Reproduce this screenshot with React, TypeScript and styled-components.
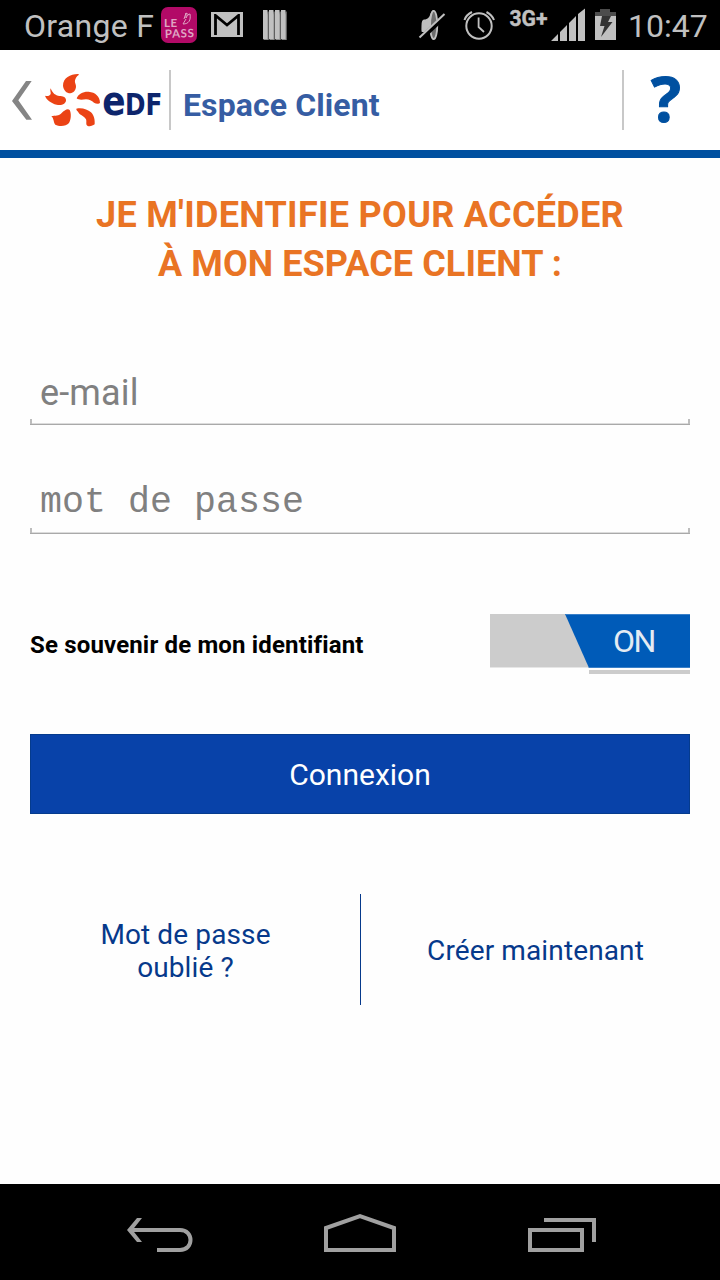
import React from "react";
import styled, { createGlobalStyle } from "styled-components";

const GlobalStyle = createGlobalStyle`
  * { box-sizing: border-box; }
  body { margin: 0; background: #fff; font-family: Roboto, sans-serif; }
  svg { display: block; flex: none; }
`;

const Screen = styled.div`
  display: flex;
  flex-direction: column;
  width: 720px;
  height: 1280px;
  overflow: hidden;
  background: #fefefe;
`;

const StatusBar = styled.div`
  display: flex;
  justify-content: space-between;
  height: 50px;
  padding: 0 12px 0 24px;
  background: #000;
  color: #c0c0c0;
`;

const StatusGroup = styled.div`
  display: flex;
`;

const StatusText = styled.span<{ $width: number; $spacing?: number }>`
  width: ${(p) => p.$width}px;
  font-size: 32px;
  line-height: 52px;
  letter-spacing: ${(p) => p.$spacing ?? 0}px;
  white-space: nowrap;
`;

const Header = styled.header`
  display: flex;
  flex: none;
  align-items: center;
  height: 108px;
  border-bottom: 8px solid #0050a0;
  background: #fff;
`;

const Divider = styled.div`
  width: 2px;
  height: 60px;
  background: #c8c8c8;
`;

const HeaderTitle = styled.h1`
  flex: 1;
  margin: 0;
  padding: 9px 0 0 12px;
  color: #365da3;
  font-size: 32px;
  font-weight: 700;
  line-height: 38px;
  letter-spacing: 0.1px;
`;

const HelpButton = styled.button`
  width: 96px;
  height: 100px;
  padding: 0;
  border: 0;
  background: none;
`;

const Main = styled.main`
  display: flex;
  flex: 1;
  flex-direction: column;
  padding: 33px 30px 0;
`;

const Heading = styled.h2`
  margin: 0 0 71px;
  color: #e97424;
  font-size: 36px;
  font-weight: 700;
  line-height: 49px;
  text-align: center;
  white-space: nowrap;
`;

const HeadingLine = styled.span<{ $spacing: number }>`
  display: block;
  letter-spacing: ${(p) => p.$spacing}px;
`;

const Field = styled.div`
  position: relative;
  height: 65px;
  margin-bottom: 44px;
  border-bottom: 1px solid #a9a9a9;
  box-shadow: inset 0 -1px 0 #dcdcdc;

  &::before,
  &::after {
    content: "";
    position: absolute;
    bottom: 0;
    width: 2px;
    height: 5px;
    background: #bdbdbd;
  }
  &::before { left: 0; }
  &::after { right: 0; }
`;

const Input = styled.input<{ $mono?: boolean }>`
  width: 100%;
  height: 64px;
  padding: ${(p) => (p.$mono ? "3px 10px 0" : "1px 10px 0")};
  border: 0;
  outline: 0;
  background: none;
  font-family: ${(p) => (p.$mono ? '"Liberation Mono", monospace' : "Roboto, sans-serif")};
  font-size: ${(p) => (p.$mono ? 36.6 : 36)}px;
  letter-spacing: ${(p) => (p.$mono ? 0.05 : 0.15)}px;

  &::placeholder {
    color: #808080;
    opacity: 1;
  }
`;

const RememberRow = styled.div`
  display: flex;
  justify-content: space-between;
  height: 60px;
  margin: 36px 0 60px;
`;

const RememberLabel = styled.span`
  color: #000;
  font-size: 24px;
  font-weight: 700;
  line-height: 62px;
  letter-spacing: 0.16px;
  font-variant-ligatures: common-ligatures;
`;

const Toggle = styled.div`
  display: flex;
  flex-direction: column;
  align-items: flex-end;
  justify-content: space-between;
  width: 200px;
`;

const ToggleTrack = styled.div`
  width: 200px;
  height: 54px;
  border-bottom: 1px solid #e6e6e6;
  background: #ccc;
`;

const ToggleThumb = styled.div`
  height: 54px;
  margin-left: 75px;
  padding-left: 48px;
  clip-path: polygon(0 0, 100% 0, 100% 100%, 24px 100%);
  border-top: 1px solid #3a80c8;
  border-bottom: 1px solid #3a80c8;
  background: #005bb8;
  color: #e4ebf3;
  font-size: 32px;
  line-height: 53px;
  letter-spacing: -1.5px;
`;

const ToggleShadow = styled.div`
  width: 101px;
  height: 4px;
  background: #ccc;
`;

const SubmitButton = styled.button`
  flex: none;
  height: 80px;
  padding: 1px 0 0;
  border: 1px solid #053b8d;
  background: #0842a9;
  color: #fff;
  font-family: Roboto, sans-serif;
  font-size: 30px;
`;

const Links = styled.div`
  display: flex;
  height: 111px;
  margin-top: 80px;
`;

const LinkCell = styled.a<{ $width: number; $inset: string }>`
  display: flex;
  align-items: center;
  justify-content: center;
  width: ${(p) => p.$width}px;
  padding: ${(p) => p.$inset};
  color: #06398b;
  font-size: 28px;
  line-height: 33px;
  letter-spacing: 0.12px;
  text-align: center;
`;

const LinkDivider = styled.div`
  width: 1px;
  background: #06398b;
`;

const NavBar = styled.nav`
  display: flex;
  flex: none;
  justify-content: center;
  height: 96px;
  background: #000;
`;

const PassIcon = () => (
  <svg width="36" height="50" viewBox="161 0 36 50">
    <rect x="161" y="7" width="36" height="36" rx="7" fill="#b20a67" />
    <g fill="#dfa5c3" fontFamily="Lato, sans-serif" fontWeight="700">
      <text x="164" y="27" fontSize="11.500" textLength="13">LE</text>
      <text x="165" y="38" fontSize="11.500" textLength="29" transform="rotate(-2 165 38)">PASS</text>
    </g>
    <path d="M183 24c6 0 8-4 7-10-2 0-3 2-4 4v-5l3 2M183 24l3-5M184 19l2-6" fill="none" stroke="#dfa5c3" strokeWidth="1" />
  </svg>
);

const MailIcon = () => (
  <svg width="56" height="50" viewBox="197 0 56 50">
    <path d="M211 12h32v25h-32z" fill="#c0c0c0" />
    <path d="M215.500 36V15.500L227 25L238.500 15.500V36" fill="none" stroke="#000" strokeWidth="2.800" />
    <path d="M212 13h30M214 36h26" stroke="#c0c0c0" strokeWidth="2" />
  </svg>
);

const BarsIcon = () => (
  <svg width="40" height="50" viewBox="253 0 40 50">
    {[263, 269, 275, 281].map((x) => (
      <g key={x}>
        <path d={`M${x + 4.5} 11.500h1.200v28.500h-5.200z`} fill="#8a8a8a" />
        <path d={`M${x} 10h4.500v29h-4.500z`} fill="#c0c0c0" />
      </g>
    ))}
  </svg>
);

const SystemIcons = () => (
  <svg width="216" height="50" viewBox="412 0 216 50">
    <g fill="none" stroke="#c0c0c0">
      <path d="M421.500 25.500C421.500 21.500 422.500 19.500 424 19.500C428 19.500 429.500 17 430.500 13.500C431.500 11 432.500 10 434 10V40C432.500 40 431 37 430 32L421.800 32C421.200 30 421.500 28 421.500 25.500Z" fill="#c0c0c0" stroke="none" />
      <ellipse cx="433.700" cy="25" rx="3.600" ry="14.200" fill="#6c6c6c" strokeWidth="1.800" />
      <path d="M419 40L446 14.500V42H436L430 33" fill="none" stroke="none" />
      <path d="M421 38.500L445.500 15.500" stroke="#000" strokeWidth="5" />
      <path d="M419.500 37.500L444.500 14" strokeWidth="2" />
      <circle cx="479" cy="26" r="12.700" strokeWidth="2" />
      <path d="M478.600 17.500V27L484 32" strokeWidth="1.800" />
      <path d="M464.500 20Q466 15 472 12M494 20Q492 15 486.500 12" strokeWidth="2" />
    </g>
    <text x="509.500" y="25.700" fill="#c0c0c0" stroke="#c0c0c0" strokeWidth="0.400" fontFamily="Roboto, sans-serif" fontSize="21.500" fontWeight="700" textLength="38" lengthAdjust="spacingAndGlyphs">3G+</text>
    <path d="M551 41l7-7v7zM560 41V32l7-7v16zM569 41V23l7-7v25zM578 41V14l7-5.500V41z" fill="#c0c0c0" />
    <path d="M595 12h5V9h10v3h6v4h-21z" fill="#4c4c4c" />
    <path d="M595 16h21v24h-21z" fill="#c0c0c0" />
    <path d="M602 16h9l-3 6h4.500L601 37l3.500-11H600z" fill="#333" />
  </svg>
);

const EdfLogo = () => (
  <svg width="169" height="100" viewBox="0 -15 507 300">
    <path d="M78 78H95L55 136L96 194H79L36 138Z" fill="#858585" />
    <g fill="#eb4315">
      <path d="M236 57C213 56 189 68 189 92C190 105 200 115 211 115C221 114 227 105 228 96C229 88 223 84 225 76C227 69 230 64 236 60Z" />
      <path d="M152 100C157 112 162 119 174 122C184 124 196 122 198 134C199 146 184 153 170 149C153 145 139 134 135 122C142 125 150 122 152 117C153 112 149 106 152 100Z" />
      <path d="M230 130C235 116 250 109 266 110C286 112 300 124 300 143C297 148 288 147 282 143C275 137 268 133 258 133C248 134 236 136 230 130Z" />
      <path d="M209 165C214 175 214 192 207 204C199 214 178 215 166 209C160 202 162 190 154 183C165 182 177 183 185 174C193 166 203 159 209 165Z" />
      <path d="M229 161C245 157 263 163 273 172C283 182 285 196 284 208C278 212 272 215 263 213C256 209 261 200 258 193C253 182 241 181 236 173C233 168 228 165 229 161Z" />
    </g>
    <g fill="#0d256c" fontFamily='"DejaVu Sans", sans-serif' fontWeight="700">
      <text x="307" y="181" fontSize="122" textLength="70" lengthAdjust="spacingAndGlyphs">e</text>
      <text x="375" y="181" fontSize="93" textLength="112" lengthAdjust="spacingAndGlyphs">DF</text>
    </g>
  </svg>
);

const HelpIcon = () => (
  <svg width="96" height="100" viewBox="624 50 96 100">
    <text x="651" y="122" fill="#0050a0" stroke="#0050a0" strokeWidth="1" fontFamily='"Open Sans", sans-serif' fontSize="63" fontWeight="700" textLength="30" lengthAdjust="spacingAndGlyphs">?</text>
  </svg>
);

const NavIcons = () => (
  <svg width="520" height="96" viewBox="100 1184 520 96">
    <g fill="none" stroke="#a0a0a0" strokeWidth="4">
      <path d="M129 1230H180C194 1230 194 1250 180 1250H157" />
      <path d="M137 1218H142L132.500 1230L142 1242H137L127 1230Z" fill="#a0a0a0" stroke="none" />
      <path d="M326 1250V1228L360 1216L394 1228V1250Z" />
      <path d="M530 1230H582V1250H530Z" />
      <path d="M544 1220H594V1242" />
    </g>
  </svg>
);

export default function App() {
  return (
    <Screen>
      <GlobalStyle />
      <StatusBar>
        <StatusGroup>
          <StatusText $width={137} $spacing={0.3}>Orange F</StatusText>
          <PassIcon />
          <MailIcon />
          <BarsIcon />
        </StatusGroup>
        <StatusGroup>
          <SystemIcons />
          <StatusText $width={80}>10:47</StatusText>
        </StatusGroup>
      </StatusBar>
      <Header>
        <EdfLogo />
        <Divider />
        <HeaderTitle>Espace Client</HeaderTitle>
        <Divider />
        <HelpButton>
          <HelpIcon />
        </HelpButton>
      </Header>
      <Main>
        <Heading>
          <HeadingLine $spacing={0.3}>JE M'IDENTIFIE POUR ACCÉDER</HeadingLine>
          <HeadingLine $spacing={0.08}>À MON ESPACE CLIENT :</HeadingLine>
        </Heading>
        <Field>
          <Input type="email" placeholder="e-mail" />
        </Field>
        <Field>
          <Input type="password" placeholder="mot de passe" $mono />
        </Field>
        <RememberRow>
          <RememberLabel>Se souvenir de mon identifiant</RememberLabel>
          <Toggle>
            <ToggleTrack>
              <ToggleThumb>ON</ToggleThumb>
            </ToggleTrack>
            <ToggleShadow />
          </Toggle>
        </RememberRow>
        <SubmitButton>Connexion</SubmitButton>
        <Links>
          <LinkCell $width={330} $inset="3px 19px 0 0">
            <span>
              Mot de passe
              <br />
              oublié ?
            </span>
          </LinkCell>
          <LinkDivider />
          <LinkCell $width={329} $inset="1px 0 0 20px">Créer maintenant</LinkCell>
        </Links>
      </Main>
      <NavBar>
        <NavIcons />
      </NavBar>
    </Screen>
  );
}
